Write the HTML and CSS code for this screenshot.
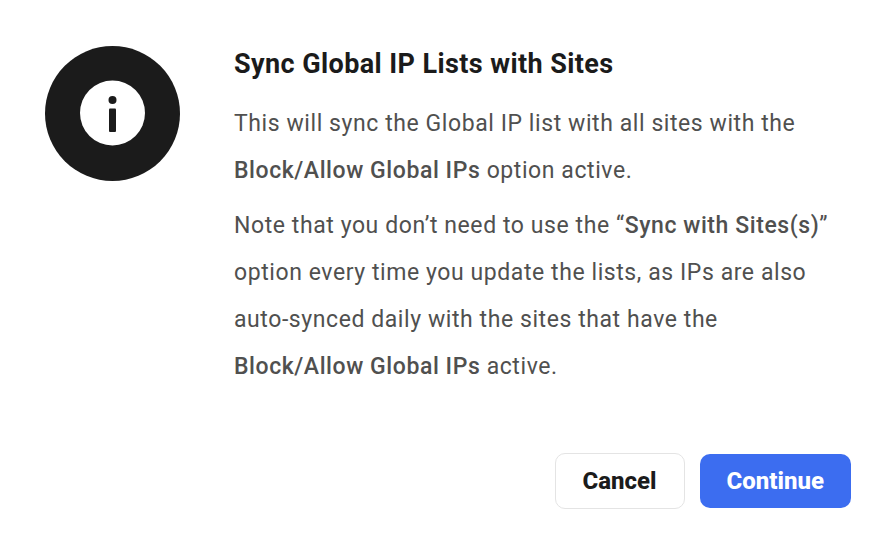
FILE: index.html
```html
<!DOCTYPE html>
<html lang="en">

<head>
    <meta charset="UTF-8">
    <meta name="viewport" content="width=device-width, initial-scale=1.0">
    <title>Sync Global IP Lists</title>
    <link rel="stylesheet" href="styles.css">
</head>

<body>

    <main class="dialog" role="dialog" aria-labelledby="dialog-title">
        <div class="dialog-body">
            <svg class="dialog-icon" viewBox="0 0 135 135" aria-hidden="true">
                <circle cx="67.5" cy="67.5" r="67.5" fill="#1b1b1b"/>
                <circle cx="67.5" cy="67" r="32.5" fill="#fff"/>
                <circle cx="67.5" cy="54" r="4" fill="#1b1b1b"/>
                <rect x="64" y="62.5" width="7" height="23.5" rx="1" fill="#1b1b1b"/>
            </svg>
            <div class="dialog-content">
                <h1 id="dialog-title">Sync Global IP Lists with Sites</h1>
                <p>This will sync the Global IP list with all sites with the <strong>Block/Allow Global IPs</strong> option active.</p>
                <p>Note that you don’t need to use the “<strong>Sync with Sites(s)</strong>” option every time you update the lists, as IPs are also auto-synced daily with the sites that have the <strong>Block/Allow Global IPs</strong> active.</p>
            </div>
        </div>
        <div class="dialog-actions">
            <button type="button" class="btn btn-cancel">Cancel</button>
            <button type="button" class="btn btn-continue">Continue</button>
        </div>
    </main>

</body>

</html>
```

FILE: styles.css
```css
body {
    font-family: Roboto, sans-serif;
    margin: 0;
    background-color: #fff;
    color: #50504f;
}

.dialog {
    box-sizing: border-box;
    padding: 46px 35px 30px 45px;
}

.dialog-body {
    display: flex;
    align-items: flex-start;
    gap: 54px;
}

.dialog-icon {
    width: 135px;
    height: 135px;
    flex-shrink: 0;
}

h1 {
    margin: 0 0 18px;
    font-size: 27px;
    line-height: 36px;
    font-weight: 700;
    letter-spacing: 0.015em;
    color: #1b1b1b;
}

p {
    margin: 0 0 8px;
    font-size: 23px;
    line-height: 47px;
    letter-spacing: 0.025em;
}

strong {
    font-weight: 500;
}

.dialog-actions {
    display: flex;
    justify-content: flex-end;
    align-items: center;
    gap: 15px;
    margin-top: 55px;
}

.btn {
    box-sizing: border-box;
    border: none;
    border-radius: 10px;
    height: 54px;
    padding: 0 27px;
    font-family: inherit;
    font-size: 24px;
    font-weight: 800;
    cursor: pointer;
}

.btn-cancel {
    height: 56px;
    border: 1px solid #e4e4e4;
    background-color: #fff;
    color: #1b1b1b;
}

.btn-continue {
    background-color: #3c6df0;
    color: #fff;
}
```
